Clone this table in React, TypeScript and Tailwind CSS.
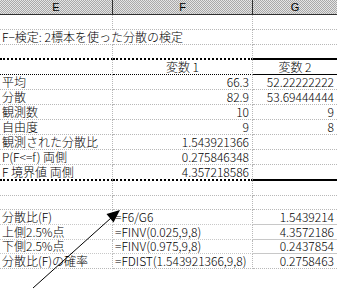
// Excel sheet: F-test output (Analysis ToolPak) plus the hand-written formula check below it.
import React from 'react';

type Line = 'dot' | 'thick' | 'black' | 'solid' | 'none';

interface Row {
  h: 'h14' | 'h15' | 'h16';
  e?: string;
  f?: string;
  g?: string;
  fAlign?: 'left' | 'right' | 'center';
  gAlign?: 'right' | 'center';
  line: Line;
  span?: boolean; // text in E overflows into F, so no gridline between them
}

const rows: Row[] = [
  { h: 'h15', line: 'dot' },
  { h: 'h15', e: 'F−検定: 2標本を使った分散の検定', line: 'dot', span: true },
  { h: 'h15', line: 'thick' },
  { h: 'h15', f: '変数 1', g: '変数 2', fAlign: 'center', gAlign: 'center', line: 'black' },
  { h: 'h15', e: '平均', f: '66.3', g: '52.22222222', line: 'dot' },
  { h: 'h15', e: '分散', f: '82.9', g: '53.69444444', line: 'dot' },
  { h: 'h15', e: '観測数', f: '10', g: '9', line: 'dot' },
  { h: 'h15', e: '自由度', f: '9', g: '8', line: 'dot' },
  { h: 'h15', e: '観測された分散比', f: '1.543921366', line: 'dot' },
  { h: 'h15', e: 'P(F<=f) 両側', f: '0.275846348', line: 'dot' },
  { h: 'h16', e: 'F 境界値 両側', f: '4.357218586', line: 'thick' },
  { h: 'h15', line: 'dot' },
  { h: 'h14', line: 'dot' },
  { h: 'h15', e: '分散比(F)', f: '=F6/G6', g: '1.5439214', fAlign: 'left', line: 'solid' },
  { h: 'h15', e: '上側2.5%点', f: '=FINV(0.025,9,8)', g: '4.3572186', fAlign: 'left', line: 'solid' },
  { h: 'h14', e: '下側2.5%点', f: '=FINV(0.975,9,8)', g: '0.2437854', fAlign: 'left', line: 'solid' },
  { h: 'h15', e: '分散比(F)の確率', f: '=FDIST(1.543921366,9,8)', g: '0.2758463', fAlign: 'left', line: 'dot' },
];

const heightClass = { h14: 'h-[14px]', h15: 'h-[15px]', h16: 'h-[16px]' };

const lineClass: Record<Line, string> = {
  dot: 'border-b border-dotted border-b-[#b8b8b8]',
  solid: 'border-b border-b-[#c8c8c8]',
  black: 'border-b border-b-black',
  thick: 'border-b-2 border-b-black',
  none: '',
};

const alignClass = {
  left: 'justify-start pl-[2px]',
  right: 'justify-end pr-[3px]',
  center: 'justify-center',
};

function Cell({ text, align, divider, row }: { text?: string; align: 'left' | 'right' | 'center'; divider: boolean; row: Row }) {
  return (
    <div
      className={`flex items-end pb-[1px] leading-none whitespace-nowrap ${alignClass[align]} ${lineClass[row.line]} ${
        divider ? 'border-r border-dotted border-r-[#b8b8b8]' : ''
      }`}
    >
      {text}
    </div>
  );
}

function Header() {
  const cell =
    'flex items-center justify-center overflow-hidden border-b border-b-[#303030] bg-[repeating-conic-gradient(#a8a8a8_0_25%,#e4e4e4_0_50%)] bg-[length:2px_2px]';
  return (
    <div className="grid h-[15px] grid-cols-[113px_140px_84px] text-[11px] leading-none" style={{ fontFamily: '"Liberation Sans", sans-serif' }}>
      <div className={`${cell} border-r border-r-[#303030]`}>E</div>
      <div className={`${cell} border-r border-r-[#303030]`}>F</div>
      <div className={cell}>G</div>
    </div>
  );
}

export default function App() {
  return (
    <div
      className="relative h-[299px] w-[337px] overflow-hidden bg-white text-[12px] font-light text-black"
      style={{ fontFamily: '"Noto Sans CJK JP", "Liberation Sans", sans-serif' }}
    >
      <Header />
      <div className="flex flex-col">
        {rows.map((row, i) => (
          <div key={i} className={`grid grid-cols-[113px_140px_84px] ${heightClass[row.h]}`}>
            <Cell text={row.e} align="left" divider={!row.span} row={row} />
            <Cell text={row.f} align={row.fAlign ?? 'right'} divider row={row} />
            <Cell text={row.g} align={row.gAlign ?? 'right'} divider={false} row={row} />
          </div>
        ))}
      </div>

      {/* callout arrow pointing at the =F6/G6 cell */}
      <svg className="pointer-events-none absolute left-0 top-0" width="337" height="299" viewBox="0 0 337 299">
        <line x1="33" y1="288" x2="111" y2="218" stroke="black" strokeWidth="1" />
        <polygon points="120,210 106.5,214 113.5,222.5" fill="black" />
      </svg>
    </div>
  );
}
